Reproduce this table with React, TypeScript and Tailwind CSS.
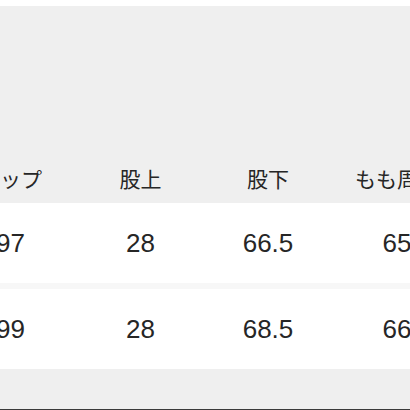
import React from "react";

const cols = ["ヒップ", "股上", "股下", "もも周り"];
const rows = [
  ["97", "28", "66.5", "65"],
  ["99", "28", "68.5", "66"],
];

const font = { fontFamily: '"Liberation Sans", "Noto Sans CJK JP", sans-serif' };

export default function App() {
  return (
    <div className="w-[410px] h-[410px] overflow-hidden bg-white text-[#262626]" style={font}>
      <div className="h-[6px] bg-white" />
      {/* header */}
      <div className="h-[197px] bg-[#efefef] flex flex-col justify-end">
        <div className="h-[48px] ml-[-55px] grid grid-cols-[131px_129px_126px_132px] items-center whitespace-nowrap">
          {cols.map((c) => (
            <div key={c} className="text-center text-[21px] leading-none">
              {c}
            </div>
          ))}
        </div>
      </div>

      {/* body rows */}
      {rows.map((r, i) => (
        <div key={i}>
          {i > 0 && <div className="h-[6px] bg-[#f7f7f7]" />}
          <div className="h-[80px] ml-[-55px] grid grid-cols-[131px_129px_126px_132px] items-center whitespace-nowrap bg-white">
            {r.map((v, j) => (
              <div key={j} className="text-center text-[26px] leading-none">
                {v}
              </div>
            ))}
          </div>
        </div>
      ))}

      <div className="h-[40px] bg-[#efefef]" />
      <div className="h-[3px] bg-[#3a3a3a]" />
    </div>
  );
}
